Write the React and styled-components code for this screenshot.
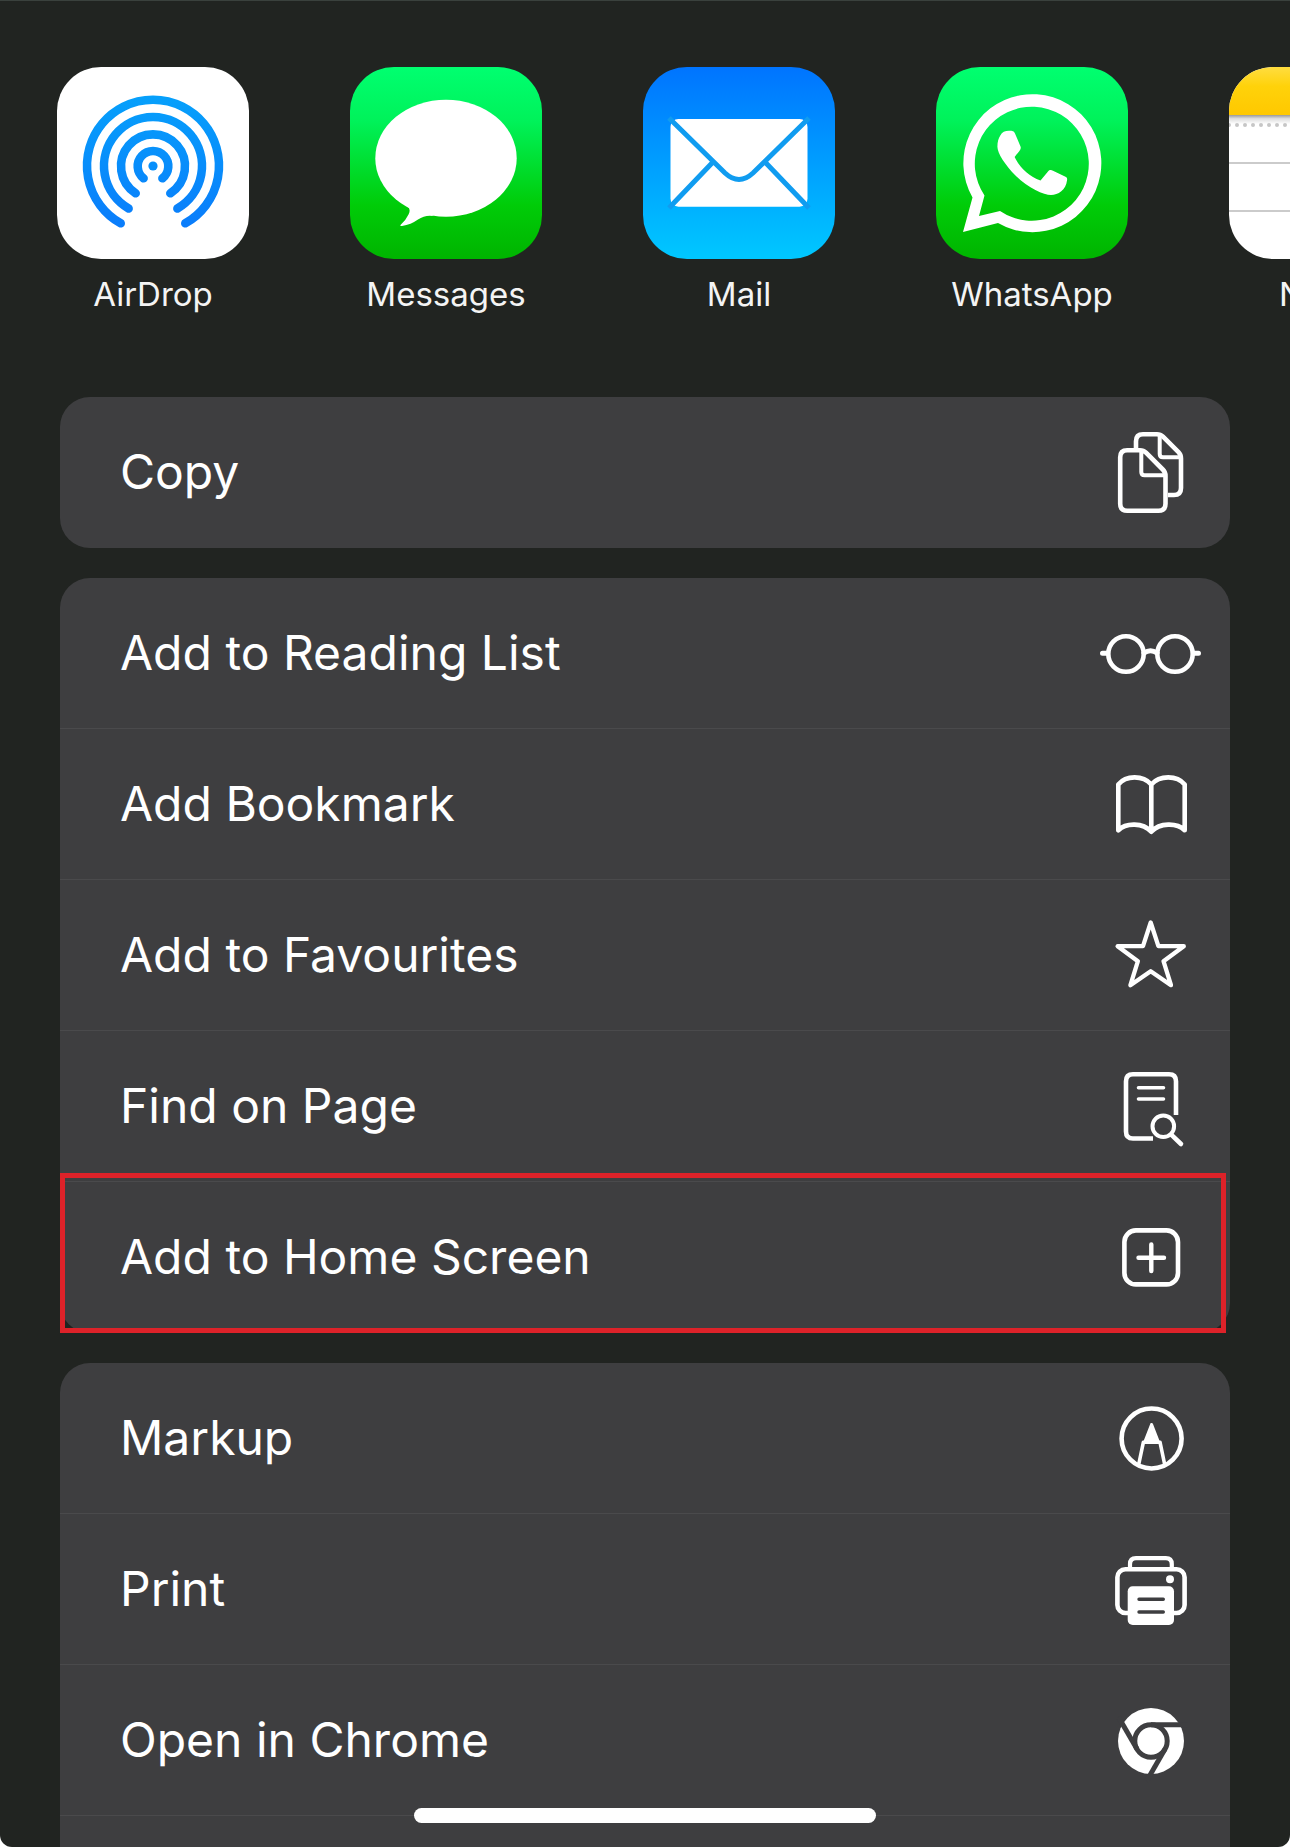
import React from "react";
import styled, {createGlobalStyle} from "styled-components";

const GlobalStyle = createGlobalStyle`
  body {
    margin: 0;
    background: #ffffff;
    font-family: Inter, "Liberation Sans", sans-serif;
  }
`;

const Sheet = styled.main`
  box-sizing: border-box;
  min-height: 100vh;
  display: flex;
  flex-direction: column;
  gap: 30px;
  border-top: 1px solid #3a413d;
  border-radius: 0 0 12px 12px;
  background: #212421;
  color: #ffffff;
`;

const AppStrip = styled.nav`
  display: flex;
  gap: 101px;
  padding: 66px 0 54px 57px;
  overflow-x: auto;
  scrollbar-width: none;
`;

const AppButton = styled.button`
  flex: none;
  width: 192px;
  display: flex;
  flex-direction: column;
  align-items: center;
  gap: 16px;
  padding: 0;
  border: none;
  background: none;
  color: #f4f4f4;
  font: 400 33px/38px Inter, "Liberation Sans", sans-serif;
  cursor: pointer;
`;

const AppIcon = styled.svg`
  display: block;
  width: 192px;
  height: 192px;
  border-radius: 44px;
  background: ${(props => props.$background)};
`;

const Group = styled.ul`
  flex: ${(props => props.$open ? "1" : "none")};
  margin: 0 60px;
  padding: 0;
  list-style: none;
  border-radius: ${(props => props.$open ? "30px 30px 0 0" : "30px")};
  background: #3e3e40;
`;

const Row = styled.li`
  position: relative;
  box-sizing: border-box;
  height: 151px;
  border-bottom: 1px solid ${(props => props.$divider ? "#4a4a4c" : "transparent")};
`;

const ActionButton = styled.button`
  width: 100%;
  height: 100%;
  display: flex;
  align-items: center;
  justify-content: space-between;
  padding: 0 28px 0 60px;
  border: none;
  background: none;
  color: #ffffff;
  font: 400 48px/60px Inter, "Liberation Sans", sans-serif;
  text-align: left;
  cursor: pointer;
`;

const Glyph = styled.svg`
  flex: none;
  width: 102px;
  height: 102px;
  fill: none;
  stroke: #ffffff;
  stroke-width: 4.6;
  stroke-linecap: round;
  stroke-linejoin: round;
`;

const Highlight = styled.span`
  position: absolute;
  top: -9px;
  right: 4px;
  bottom: -1px;
  left: 0;
  border: 5px solid #dd2229;
  pointer-events: none;
`;

const HomeIndicator = styled.div`
  position: fixed;
  bottom: 24px;
  left: 50%;
  width: 462px;
  height: 15px;
  margin-left: -231px;
  border-radius: 8px;
  background: #ffffff;
`;

const GREEN = "linear-gradient(#00ff70, #00f25a 28%, #00cc08 72%, #00b400)";

const apps = [
    {
        name: "AirDrop",
        background: "#ffffff",
        art: (
            <>
                <defs>
                    <linearGradient id="airdrop" gradientUnits="userSpaceOnUse" x1="0" y1="29" x2="0" y2="162">
                        <stop offset="0" stopColor="#06a0fb" />
                        <stop offset="1" stopColor="#0a7cfb" />
                    </linearGradient>
                </defs>
                <g fill="none" stroke="url(#airdrop)" strokeWidth="8.6" strokeLinecap="round">
                    <path d="M63.7 156.3A66 66 0 1 1 128.3 156.3" />
                    <path d="M71.6 141.5A49 49 0 1 1 120.4 141.5" />
                    <path d="M78.7 126.3A32 32 0 1 1 113.3 126.3" />
                    <path d="M86.6 111.3A15.3 15.3 0 1 1 105.4 111.3" />
                </g>
                <circle cx="96" cy="99" r="4.6" fill="#078ffb" />
            </>
        ),
    },
    {
        name: "Messages",
        background: GREEN,
        art: (
            <g fill="#ffffff">
                <ellipse cx="96" cy="91.2" rx="70.7" ry="58.5" />
                <path d="M50 132L58 140Q61 143 58.5 147.5Q56 153 50.5 158Q49.5 159.3 52 159Q61 157.5 68 152.5Q75 147.5 84 149Z" />
            </g>
        ),
    },
    {
        name: "Mail",
        background: "linear-gradient(#0074ff, #00c8ff)",
        art: (
            <>
                <rect x="27.5" y="52" width="137" height="87.7" rx="8" fill="#ffffff" />
                <path
                    d="M26 51L82 106Q96 119 110 106L166 51M70 95L26 141M122 95L166 141"
                    fill="none"
                    stroke="#109cf0"
                    strokeWidth="5"
                />
            </>
        ),
    },
    {
        name: "WhatsApp",
        background: GREEN,
        art: (
            <g fill="#ffffff">
                <path
                    fillRule="evenodd"
                    d="M27 165L36.5 130.5A69 69 0 1 1 62 156ZM43 149L64 144A57 57 0 1 0 48.5 128.5Z"
                />
                <path d="M64.3 68.5C66 65 69 63.7 73 63.7C76.5 63.7 78 64 79 66.5L84.5 79.5C85.3 81.5 84.5 83 78.6 90C84 101 93 109 104.5 113.5L112 104.5C113.5 102.8 115 102.8 117 103.7L129.5 109.8C131.3 110.7 131.3 111.8 131 113.5C130 123 122 128 115 128C108 128 92 121 80 109C69 98 61.4 86 61.4 79.7C61.4 75 62.5 71 64.3 68.5Z" />
            </g>
        ),
    },
    {
        name: "Notes",
        background: "#ffffff",
        art: (
            <>
                <defs>
                    <linearGradient id="notes" x1="0" y1="0" x2="0" y2="1">
                        <stop offset="0" stopColor="#ffdd40" />
                        <stop offset="0.4" stopColor="#ffd20a" />
                        <stop offset="1" stopColor="#ffc800" />
                    </linearGradient>
                    <linearGradient id="notes-shade" x1="0" y1="0" x2="0" y2="1">
                        <stop offset="0" stopColor="#9a9a9a" />
                        <stop offset="0.4" stopColor="#dddddd" />
                        <stop offset="1" stopColor="#ffffff" />
                    </linearGradient>
                </defs>
                <rect width="192" height="48" fill="url(#notes)" />
                <rect y="48" width="192" height="9" fill="url(#notes-shade)" />
                <path d="M0 58H192" stroke="#c6c6c6" strokeWidth="4" strokeLinecap="round" strokeDasharray="0 8" />
                <path d="M0 96H192M0 144H192" stroke="#cbcbcb" strokeWidth="2" />
            </>
        ),
    },
];

const icons = {
    copy: (
        <>
            <path d="M27.2 29.2H40Q43.5 29.2 46 31.7L62.8 48.5Q65.5 51.2 65.5 55V82.8Q65.5 89.8 58.5 89.8H27.2Q20.2 89.8 20.2 82.8V36.2Q20.2 29.2 27.2 29.2Z" />
            <path d="M36 28V20.2Q36 13.2 43 13.2H57Q60.5 13.2 63 15.7L78.5 31.2Q81 33.7 81 37.5V67Q81 74 74 74H68" strokeLinecap="butt" />
            <path d="M41.3 30V51Q41.3 54.3 44.6 54.3H65M59.7 14V33Q59.7 36.3 63 36.3H80" strokeWidth="4" />
        </>
    ),
    glasses: (
        <>
            <circle cx="26" cy="52" r="17.7" />
            <circle cx="75" cy="52" r="17.7" />
            <path d="M44 51Q50.5 46.5 57 51M2.5 51.2H7M94 51.2H98.5" strokeWidth="5" />
        </>
    ),
    book: (
        <path d="M18.3 77.3V31.5C26 22 43 22 51.3 31.5C59.6 22 77 22 84.7 31.5V77.3C77 69.5 59.6 69.5 51.3 78.7C43 69.5 26 69.5 18.3 77.3ZM51.3 31.5V78" />
    ),
    star: (
        <path
            d="M50.7 18.5L58.4 42.2H83.8L63.5 57.2L71 81.2L50.7 67.2L30.4 81.2L37.9 57.2L17.6 42.2H43Z"
            strokeWidth="4.3"
        />
    ),
    find: (
        <>
            <path d="M76 60V26.2Q76 19.2 69 19.2H33Q26 19.2 26 26.2V76.5Q26 83.5 33 83.5H53" strokeLinecap="butt" />
            <path d="M38.5 32.7H63.5M38.5 44H63.5" strokeWidth="3.6" />
            <circle cx="63.3" cy="71.3" r="10.8" strokeWidth="4" />
            <path d="M71.5 79.8L81 89" />
        </>
    ),
    plus: (
        <>
            <rect x="24.4" y="24.4" width="53.6" height="54" rx="11.5" />
            <path d="M51.3 38.5V65M38.5 51.7H64" strokeWidth="4.4" />
        </>
    ),
    markup: (
        <>
            <circle cx="51.6" cy="51.5" r="30" />
            <path d="M38.6 78L43.4 55.2H60L64.8 78" strokeWidth="3.6" />
            <path d="M51.6 37.5L44.8 55H58.4Z" fill="#ffffff" strokeWidth="3" />
        </>
    ),
    printer: (
        <>
            <path d="M30 30V26.2Q30 20.2 36 20.2H65.8Q71.8 20.2 71.8 26.2V30" strokeLinecap="butt" strokeWidth="4.2" />
            <rect x="17.4" y="31.2" width="67.2" height="43.8" rx="8" />
            <rect x="27.7" y="48.3" width="46.3" height="38.7" rx="5" fill="#ffffff" stroke="none" />
            <path d="M39 61.3H63.3M39 74H63.3" stroke="#3e3e40" strokeWidth="3.4" />
            <circle cx="70" cy="41.3" r="4" fill="#ffffff" stroke="none" />
        </>
    ),
    chrome: (
        <>
            <circle cx="51" cy="52" r="33" fill="#ffffff" stroke="none" />
            <g stroke="#3e3e40" strokeWidth="5" strokeLinecap="butt">
                <circle cx="51" cy="52" r="16.2" />
                <path d="M51 35.8H88" />
                <path d="M51 35.8H88" transform="rotate(120 51 52)" />
                <path d="M51 35.8H88" transform="rotate(240 51 52)" />
            </g>
        </>
    ),
};

const groups = [
    {
        id: "clipboard",
        actions: [{label: "Copy", icon: "copy"}],
    },
    {
        id: "browser",
        actions: [
            {label: "Add to Reading List", icon: "glasses"},
            {label: "Add Bookmark", icon: "book"},
            {label: "Add to Favourites", icon: "star"},
            {label: "Find on Page", icon: "find"},
            {label: "Add to Home Screen", icon: "plus", highlighted: true},
        ],
    },
    {
        // runs on below the fold, so it keeps its last divider and fills the sheet
        id: "more",
        open: true,
        actions: [
            {label: "Markup", icon: "markup"},
            {label: "Print", icon: "printer"},
            {label: "Open in Chrome", icon: "chrome"},
        ],
    },
];

function ActionGroup({actions, open}) {
    return (
        <Group $open={open}>
            {actions.map((action, index) => (
                <Row key={action.label} $divider={open || index < actions.length - 1}>
                    <ActionButton type="button">
                        {action.label}
                        <Glyph viewBox="0 0 102 102" aria-hidden="true">
                            {icons[action.icon]}
                        </Glyph>
                    </ActionButton>
                    {action.highlighted ? <Highlight /> : null}
                </Row>
            ))}
        </Group>
    );
}

export default function App() {
    return (
        <>
            <GlobalStyle />
            <Sheet>
                <AppStrip>
                    {apps.map(app => (
                        <AppButton key={app.name} type="button">
                            <AppIcon viewBox="0 0 192 192" $background={app.background} aria-hidden="true">
                                {app.art}
                            </AppIcon>
                            {app.name}
                        </AppButton>
                    ))}
                </AppStrip>
                {groups.map(group => (
                    <ActionGroup key={group.id} actions={group.actions} open={group.open} />
                ))}
            </Sheet>
            <HomeIndicator />
        </>
    );
}
